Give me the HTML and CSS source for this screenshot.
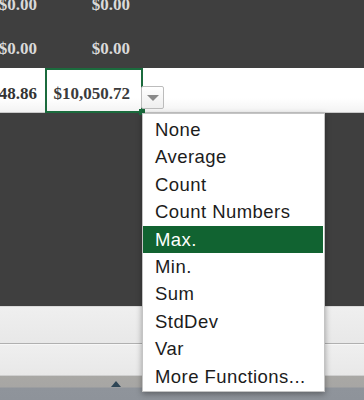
FILE: index.html
```html
<!DOCTYPE html>
<html>
<head>
<meta charset="utf-8">
<link rel="stylesheet" href="styles.css">
</head>
<body>
<div class="screen">
  <div class="sheet-dim">
    <div class="row row-first">
      <div class="cell col-a">$0.00</div>
      <div class="cell col-b">$0.00</div>
    </div>
    <div class="row">
      <div class="cell col-a">$0.00</div>
      <div class="cell col-b">$0.00</div>
    </div>
  </div>
  <div class="row row-total">
    <div class="cell col-a">48.86</div>
    <div class="cell col-b selected">$10,050.72<span class="fill-handle"></span></div>
    <div class="dropdown-btn"><span class="tri"></span></div>
  </div>
  <div class="sheet-dim dim-lower"></div>
  <div class="bar bar-one"></div>
  <div class="bar bar-two"></div>
  <div class="dock"><span class="dock-icon"></span></div>
  <ul class="menu">
    <li class="item">None</li>
    <li class="item">Average</li>
    <li class="item">Count</li>
    <li class="item">Count Numbers</li>
    <li class="item active">Max.</li>
    <li class="item">Min.</li>
    <li class="item">Sum</li>
    <li class="item">StdDev</li>
    <li class="item">Var</li>
    <li class="item">More Functions...</li>
  </ul>
</div>
</body>
</html>
```
FILE: styles.css
```css
html, body {
  margin: 0;
  padding: 0;
}
body {
  width: 364px;
  height: 400px;
  overflow: hidden;
  background: #3f3f3f;
}
.screen {
  position: relative;
  width: 364px;
  height: 400px;
  display: flex;
  flex-direction: column;
}
.sheet-dim {
  background: #3f3f3f;
  color: #d9d9d9;
}
.row {
  display: flex;
  height: 44px;
  align-items: flex-end;
  font-family: "Liberation Serif", "Times New Roman", serif;
  font-weight: bold;
  font-size: 17px;
  line-height: 17px;
}
.row-first {
  height: 24px;
}
.cell {
  box-sizing: border-box;
  text-align: right;
  white-space: nowrap;
  padding-bottom: 11px;
}
.col-a {
  width: 45px;
  padding-right: 8px;
  overflow: visible;
  direction: rtl;
}
.col-b {
  width: 98px;
  padding-right: 13px;
}
.row-total {
  position: relative;
  height: 45px;
  background: linear-gradient(#ffffff 0, #ffffff 30px, #f3f3f3 44px);
  box-shadow: inset 0 -1px 0 #c9c9c9;
  color: #3a3a3a;
}
.row-total .col-a {
  color: #333;
}
.selected {
  position: relative;
  height: 45px;
  border: 2px solid #1b6b3d;
  padding-bottom: 9px;
  padding-right: 11px;
  display: flex;
  align-items: flex-end;
  justify-content: flex-end;
  color: #3b3b3b;
}
.fill-handle {
  position: absolute;
  right: -4px;
  bottom: -4px;
  width: 6px;
  height: 6px;
  background: #1b6b3d;
  border: 1px solid #fff;
  border-width: 0;
}
.dropdown-btn {
  position: absolute;
  left: 141px;
  top: 18px;
  width: 23px;
  height: 23px;
  box-sizing: border-box;
  border: 1px solid #bcbcbc;
  border-radius: 2px;
  background: linear-gradient(#ffffff, #eeeeee);
  display: flex;
  align-items: center;
  justify-content: center;
}
.tri {
  width: 0;
  height: 0;
  border-left: 6px solid transparent;
  border-right: 6px solid transparent;
  border-top: 6px solid #8a8a8a;
  margin-top: 1px;
}
.dim-lower {
  height: 193px;
}
.bar {
  background: linear-gradient(#efefef, #e8e8e8);
}
.bar-one {
  height: 37px;
  border-top: 1px solid #dadada;
  box-sizing: border-box;
  border-bottom: 1px solid #b0b0b0;
  height: 38px;
}
.bar-two {
  height: 32px;
  border-top: 1px solid #f7f7f7;
  border-bottom: 1px solid #cfcfcf;
  box-sizing: border-box;
}
.dock {
  flex: 1;
  position: relative;
  background: linear-gradient(#a9a8a5 0, #a7a6a4 11px, #8f949b 12px, #8e939a 100%);
}
.dock-icon {
  position: absolute;
  left: 111px;
  top: 5px;
  width: 0;
  height: 0;
  border-left: 5px solid transparent;
  border-right: 5px solid transparent;
  border-bottom: 6px solid #2f4656;
}
.menu {
  position: absolute;
  left: 142px;
  top: 113px;
  width: 183px;
  height: 279px;
  box-sizing: border-box;
  margin: 0;
  padding: 2px 1px 0 0;
  list-style: none;
  background: #ffffff;
  border: 1px solid #c4c4c4;
  box-shadow: 0 2px 6px rgba(0, 0, 0, 0.35);
  font-family: "Liberation Sans", Arial, sans-serif;
  font-size: 18.5px;
  letter-spacing: 0.45px;
  color: #1c1c1c;
}
.item {
  height: 27.4px;
  line-height: 27.4px;
  padding-left: 12px;
  white-space: nowrap;
}
.item.active {
  background: #116331;
  color: #ffffff;
}
```
